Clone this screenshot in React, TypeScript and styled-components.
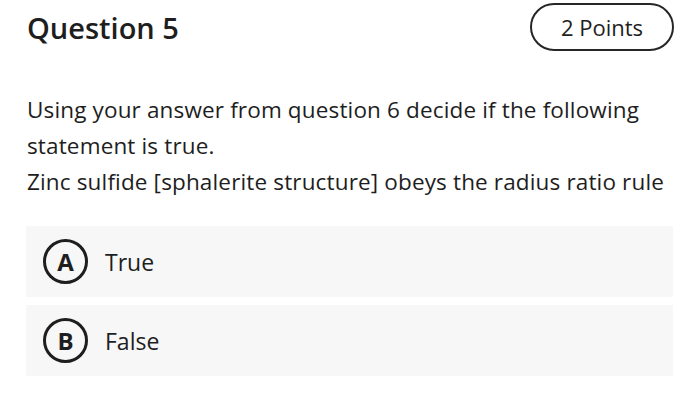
import React from "react";
import styled, { createGlobalStyle } from "styled-components";

const Global = createGlobalStyle`
  html, body { margin: 0; padding: 0; background: #fff; }
  body { font-family: "Open Sans", "Noto Sans", sans-serif; color: #1e1e1e; }
`;

const Page = styled.div`
  width: 700px;
  height: 400px;
  box-sizing: border-box;
  padding: 3px 27px 0 27px;
  display: flex;
  flex-direction: column;
`;

const Header = styled.div`
  display: flex;
  align-items: center;
  justify-content: space-between;
  height: 48px;
`;

const Title = styled.h1`
  margin: 0;
  font-size: 29px;
  font-weight: 600;
  color: #1e1e1e;
`;

const Pill = styled.div`
  box-sizing: border-box;
  width: 144px;
  height: 48px;
  margin-right: -1px;
  border: 2px solid #262626;
  border-radius: 24px;
  display: flex;
  align-items: center;
  justify-content: center;
  font-size: 22px;
  font-weight: 500;
  color: #1e1e1e;
`;

const Prompt = styled.div`
  margin-top: 41px;
  font-size: 22.5px;
  line-height: 36px;
  letter-spacing: 0.15px;
  color: #1e1e1e;
`;

const Options = styled.div`
  margin-top: 26px;
  display: flex;
  flex-direction: column;
  gap: 8px;
`;

const Option = styled.div`
  height: 71px;
  margin-left: -1px;
  background: #f7f7f7;
  display: flex;
  align-items: center;
  padding-left: 17px;
  gap: 17px;
`;

const Badge = styled.div`
  box-sizing: border-box;
  width: 45px;
  height: 45px;
  border-radius: 50%;
  border: 3px solid #1e1e1e;
  display: flex;
  align-items: center;
  justify-content: center;
  font-size: 24px;
  font-weight: 700;
  padding-bottom: 1px;
`;

const Label = styled.span`
  font-size: 23px;
  font-weight: 500;
`;

export default function App() {
  return (
    <>
      <Global />
      <Page>
        <Header>
          <Title>Question 5</Title>
          <Pill>2 Points</Pill>
        </Header>
        <Prompt>
          Using your answer from question 6 decide if the following
          <br />
          statement is true.
          <br />
          Zinc sulfide [sphalerite structure] obeys the radius ratio rule
        </Prompt>
        <Options>
          <Option>
            <Badge>A</Badge>
            <Label>True</Label>
          </Option>
          <Option>
            <Badge>B</Badge>
            <Label>False</Label>
          </Option>
        </Options>
      </Page>
    </>
  );
}
